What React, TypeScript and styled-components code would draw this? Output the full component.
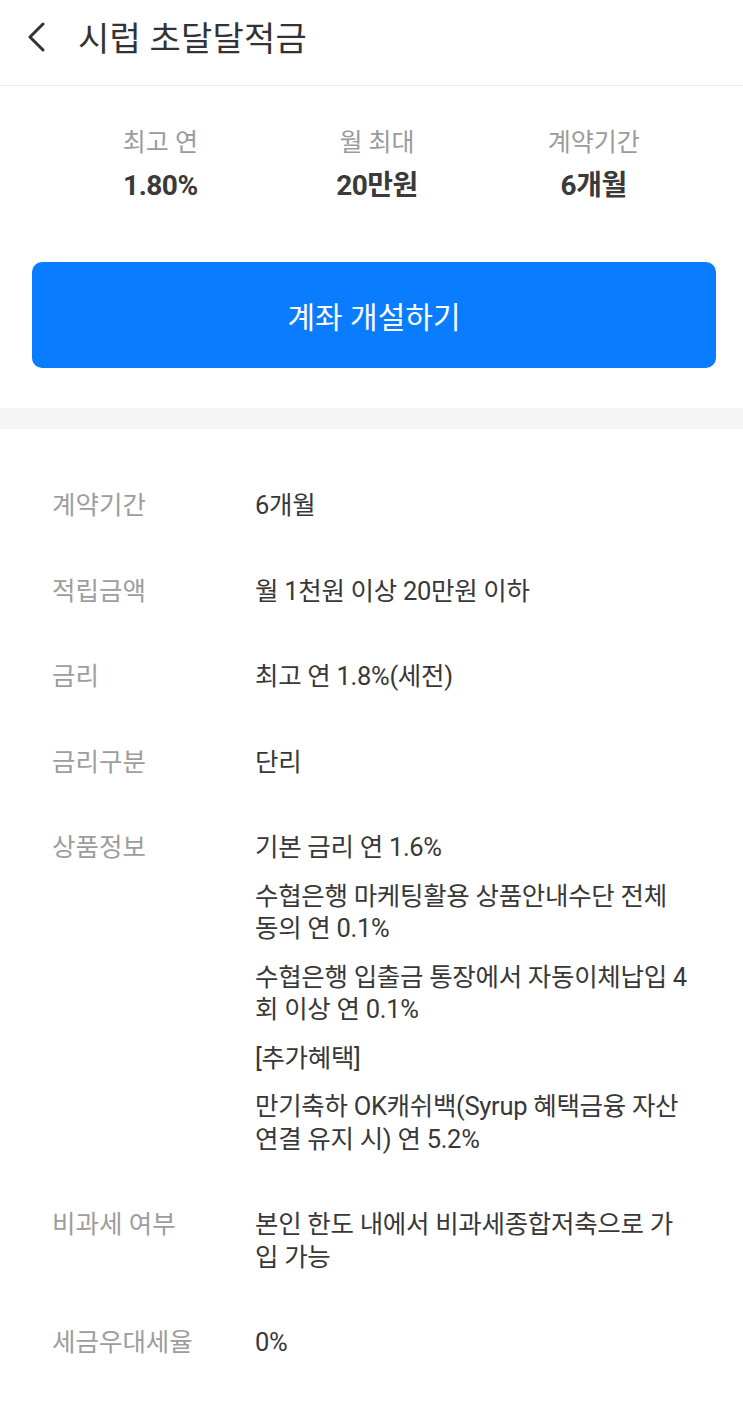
import React from "react";
import styled, { createGlobalStyle } from "styled-components";

const GlobalStyle = createGlobalStyle`
  html, body {
    margin: 0;
    padding: 0;
    background: #ffffff;
  }
  body {
    font-family: Roboto, "Noto Sans CJK KR", "Noto Sans", sans-serif;
    color: #333333;
  }
`;

const Page = styled.div`
  width: 743px;
  min-height: 1422px;
  background: #ffffff;
`;

const Header = styled.header`
  display: flex;
  align-items: center;
  height: 86px;
  padding: 0 0 12px 24px;
  border-bottom: 1px solid #ebebeb;
  box-sizing: border-box;
`;

const BackButton = styled.button`
  display: flex;
  align-items: center;
  justify-content: center;
  width: 26px;
  height: 40px;
  padding: 0;
  margin-right: 28px;
  border: none;
  background: none;
`;

const Title = styled.h1`
  margin: 0;
  font-size: 34px;
  font-weight: 400;
  color: #333333;
  letter-spacing: 0.2px;
`;

const Summary = styled.section`
  padding: 42px 27px 40px 32px;
`;

const StatGrid = styled.div`
  display: grid;
  grid-template-columns: repeat(3, 1fr);
  padding: 0 14px 0 20px;
`;

const Stat = styled.div`
  display: flex;
  flex-direction: column;
  align-items: center;
  gap: 11px;
`;

const StatLabel = styled.span`
  font-size: 25px;
  line-height: 30px;
  color: #9b9b9b;
`;

const StatValue = styled.span`
  font-size: 28px;
  line-height: 34px;
  font-weight: 700;
  color: #3a3a3a;
  letter-spacing: -0.5px;
`;

const OpenButton = styled.button`
  display: block;
  width: 100%;
  height: 106px;
  margin-top: 59px;
  border: none;
  border-radius: 10px;
  background: #0a7cff;
  color: #ffffff;
  font-family: inherit;
  font-size: 30px;
`;

const Divider = styled.div`
  height: 21px;
  background: #f5f5f5;
`;

const Details = styled.dl`
  margin: 0;
  padding: 34px 48px 40px 52px;
`;

const Row = styled.div`
  display: grid;
  grid-template-columns: 203px 1fr;
  padding: 26px 0 27px;
`;

const Label = styled.dt`
  margin: 0;
  font-size: 25.5px;
  line-height: 32.5px;
  color: #9d9d9d;
`;

const Value = styled.dd`
  margin: 0;
  display: flex;
  flex-direction: column;
  gap: 16px;
`;

const Line = styled.p`
  margin: 0;
  font-size: 25.5px;
  line-height: 32.5px;
  color: #383838;
  letter-spacing: -0.3px;
`;

const rows: { label: string; lines: string[] }[] = [
  { label: "계약기간", lines: ["6개월"] },
  { label: "적립금액", lines: ["월 1천원 이상 20만원 이하"] },
  { label: "금리", lines: ["최고 연 1.8%(세전)"] },
  { label: "금리구분", lines: ["단리"] },
  {
    label: "상품정보",
    lines: [
      "기본 금리 연 1.6%",
      "수협은행 마케팅활용 상품안내수단 전체 동의 연 0.1%",
      "수협은행 입출금 통장에서 자동이체납입 4회 이상 연 0.1%",
      "[추가혜택]",
      "만기축하 OK캐쉬백(Syrup 혜택금융 자산 연결 유지 시) 연 5.2%",
    ],
  },
  { label: "비과세 여부", lines: ["본인 한도 내에서 비과세종합저축으로 가입 가능"] },
  { label: "세금우대세율", lines: ["0%"] },
];

const stats = [
  { label: "최고 연", value: "1.80%" },
  { label: "월 최대", value: "20만원" },
  { label: "계약기간", value: "6개월" },
];

export default function App() {
  return (
    <Page>
      <GlobalStyle />
      <Header>
        <BackButton aria-label="뒤로">
          <svg width="20" height="30" viewBox="0 0 20 30">
            <polyline
              points="16,2 3,15 16,28"
              fill="none"
              stroke="#333"
              strokeWidth="3"
              strokeLinecap="round"
              strokeLinejoin="round"
            />
          </svg>
        </BackButton>
        <Title>시럽 초달달적금</Title>
      </Header>

      <Summary>
        <StatGrid>
          {stats.map((s) => (
            <Stat key={s.label}>
              <StatLabel>{s.label}</StatLabel>
              <StatValue>{s.value}</StatValue>
            </Stat>
          ))}
        </StatGrid>
        <OpenButton>계좌 개설하기</OpenButton>
      </Summary>

      <Divider />

      <Details>
        {rows.map((r) => (
          <Row key={r.label}>
            <Label>{r.label}</Label>
            <Value>
              {r.lines.map((l) => (
                <Line key={l}>{l}</Line>
              ))}
            </Value>
          </Row>
        ))}
      </Details>
    </Page>
  );
}
